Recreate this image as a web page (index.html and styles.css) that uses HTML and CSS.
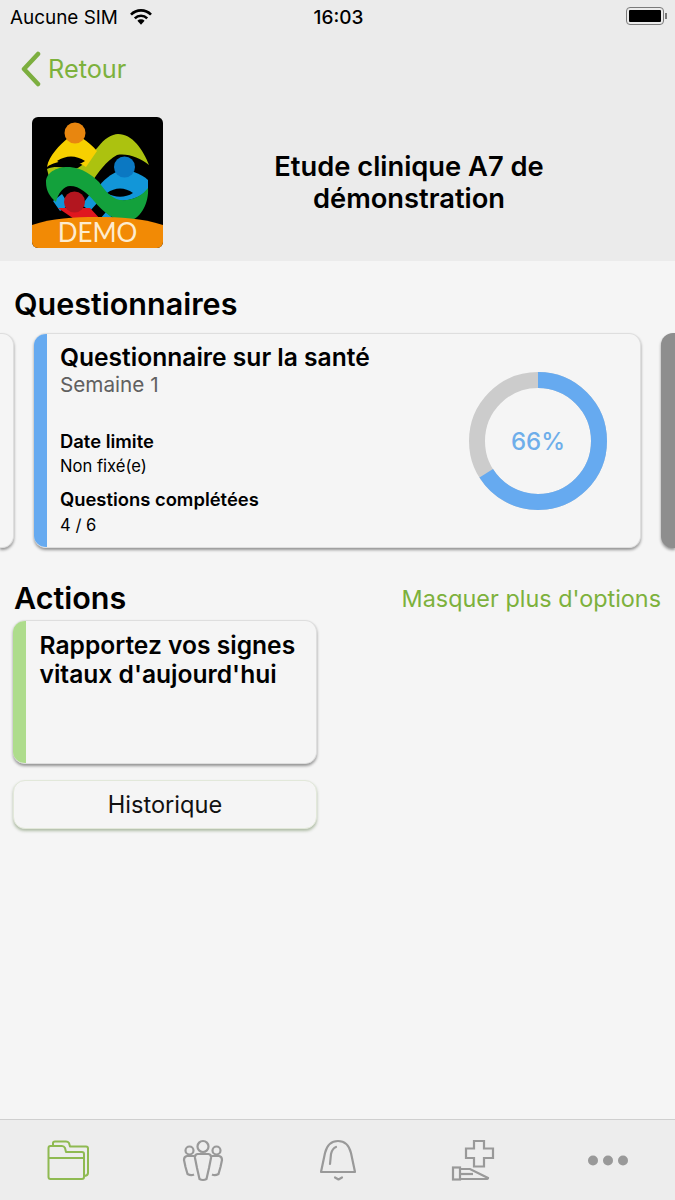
FILE: index.html
```html
<!DOCTYPE html>
<html lang="fr">
<head>
<meta charset="utf-8"/>
<meta content="width=device-width, initial-scale=1.0" name="viewport"/>
<title>Etude clinique A7</title>
<link rel="stylesheet" href="styles.css">
</head>
<body>
<div class="top">
  <div class="status-bar">
    <div class="status-left">
      <span>Aucune SIM</span>
      <svg class="wifi" viewBox="0 0 24 16" width="24" height="16">
        <path d="M12 15.8 L8.4 11.8 A5.2 5.2 0 0 1 15.6 11.8 Z" fill="#000"/>
        <path d="M5.8 9.3 A8.8 8.8 0 0 1 18.2 9.3" fill="none" stroke="#000" stroke-width="2.6"/>
        <path d="M2 5.6 A14 14 0 0 1 22 5.6" fill="none" stroke="#000" stroke-width="2.6"/>
      </svg>
    </div>
    <span class="status-time">16:03</span>
    <div class="status-right">
      <div class="battery"><div class="battery-fill"></div></div>
      <div class="battery-tip"></div>
    </div>
  </div>
  <div class="nav">
    <svg class="back-icon" viewBox="0 0 22 36" width="22" height="36">
      <path d="M18 3 L4 18 L18 33" fill="none" stroke="#7cae3f" stroke-width="4.5" stroke-linecap="round" stroke-linejoin="round"/>
    </svg>
    <span class="back-label">Retour</span>
  </div>
  <div class="study">
    <svg class="logo" viewBox="0 0 131 131" width="131" height="131">
      <rect width="131" height="131" rx="6" fill="#000"/>
      <path d="M15 52 C26 47 36 53 43 52 C52 50 58 38 66 30 C72 22 80 17 86 17 C100 17 111 32 117 48 C108 41 96 36 85 38 C74 44 66 56 59 66 C44 56 30 57 17 60 Z" fill="#acc20f"/>
      <path d="M15 50 C17 38 28 28 36 21 L50 21 C56 25 61 29 65 34 L54 50 C42 42 25 43 15 50 Z" fill="#f7d000"/>
      <path d="M25 44 C34 38 44 38 53 44 C44 50 34 50 25 44 Z" fill="#000"/>
      <circle cx="43" cy="16" r="10.5" fill="#e8860f"/>
      <path d="M64 74 C68 66 76 59 84 55 L102 55 C108 57 113 60 116 63 L116 74 C108 80 98 84 86 84 C78 82 70 78 64 74 Z" fill="#1296d8"/>
      <path d="M75 76 C83 70 93 70 101 76 C93 81 83 81 75 76 Z" fill="#000"/>
      <circle cx="92.5" cy="50" r="10.5" fill="#0b78c2"/>
      <path d="M21 84 L30 77 L37 88 L28 94 Z M50 88 L58 77 L66 85 L58 94 Z M68 102 L74 95 L84 104 Z" fill="#1296d8"/>
      <path d="M26 91 L58 91 L70 104 L48 106 Z" fill="#e0161f"/>
      <circle cx="42.5" cy="85" r="10.5" fill="#b2161f"/>
      <path d="M14 65 C14 55 26 49 38 50 C50 51 60 58 67 65 C72 72 78 81 88 83 C100 84 110 79 116 71 C117 85 110 100 98 104 C86 107 72 96 62 84 C56 77 48 69 38 69 C32 69 26 76 24 85 C18 80 14 74 14 65 Z" fill="#13a13c"/>
      <path d="M0 108 C20 101 42 100 65 100 C88 100 110 101 131 108 L131 125 A6 6 0 0 1 125 131 L6 131 A6 6 0 0 1 0 125 Z" fill="#f28a05"/>
      <text class="logo-text" x="65.5" y="124.5" text-anchor="middle">DEMO</text>
    </svg>
    <h1 class="study-title">Etude clinique A7 de démonstration</h1>
  </div>
</div>

<div class="content">
  <h2 class="section-title questionnaires-title">Questionnaires</h2>
  <div class="carousel">
    <div class="card prev-card"></div>
    <div class="card q-card">
      <div class="stripe stripe-blue"></div>
      <div class="q-body">
        <div class="q-title">Questionnaire sur la santé</div>
        <div class="q-sub">Semaine 1</div>
        <div class="q-label q-label-first">Date limite</div>
        <div class="q-value">Non fixé(e)</div>
        <div class="q-label q-label-second">Questions complétées</div>
        <div class="q-value q-value-last">4 / 6</div>
      </div>
      <svg class="ring" viewBox="0 0 140 140" width="140" height="140">
        <circle cx="70" cy="70" r="61" fill="none" stroke="#cccccc" stroke-width="16"/>
        <circle cx="70" cy="70" r="61" fill="none" stroke="#66aaf0" stroke-width="16" stroke-dasharray="253 384" transform="rotate(-90 70 70)"/>
        <text class="ring-text" x="70" y="79" text-anchor="middle">66%</text>
      </svg>
    </div>
    <div class="card next-card"></div>
  </div>

  <div class="actions-head">
    <h2 class="section-title">Actions</h2>
    <span class="more-link">Masquer plus d'options</span>
  </div>
  <div class="actions-col">
    <div class="card action-card">
      <div class="stripe stripe-green"></div>
      <div class="action-title">Rapportez vos signes vitaux d'aujourd'hui</div>
    </div>
    <div class="history-btn">Historique</div>
  </div>
</div>

<div class="tabbar">
  <div class="tab">
    <svg viewBox="0 0 44 44" width="44" height="44" fill="none" stroke="#8fba52" stroke-width="2" stroke-linejoin="round">
      <path d="M7 7 V5 Q7 3.5 9 3.5 H20 Q22 3.5 23 5 L24 8.5 H40 Q42 8.5 42 10.5 V35 Q42 37.5 38.5 38"/>
      <path d="M2.5 20 V10 Q2.5 8 4.5 8 H16 Q18 8 19 10 L20 14 H36 Q38 14 38 16 V39 Q38 41 36 41 H4.5 Q2.5 41 2.5 39 Z"/>
      <path d="M2.5 20 H38"/>
    </svg>
  </div>
  <div class="tab">
    <svg viewBox="0 0 44 44" width="44" height="44" fill="none" stroke="#999" stroke-width="2.2" stroke-linejoin="round">
      <circle cx="22" cy="8.5" r="5.5"/>
      <circle cx="8.5" cy="12.5" r="4"/>
      <circle cx="35.5" cy="12.5" r="4"/>
      <path d="M16.5 16 H27.5 Q30.5 16.5 30 20 L28 30 L25.5 41 Q22 43 18.5 41 L16 30 L14 20 Q13.5 16.5 16.5 16 Z"/>
      <path d="M13.5 18 H6 Q3 18.5 3 22 L4.5 29 L6.5 36 Q10 38 13 36.5"/>
      <path d="M30.5 18 H38 Q41 18.5 41 22 L39.5 29 L37.5 36 Q34 38 31 36.5"/>
    </svg>
  </div>
  <div class="tab">
    <svg viewBox="0 0 44 44" width="44" height="44" fill="none" stroke="#999" stroke-width="2.2" stroke-linejoin="round" stroke-linecap="round">
      <path d="M5 34 H39 L35 15 C33 7 28 3 22 3 C16 3 11 7 9 15 Z"/>
      <path d="M14 26 L15 16 C16 12 17 10 20 9"/>
      <path d="M19 39.5 L22.5 41.5 L26 39.5"/>
    </svg>
  </div>
  <div class="tab">
    <svg viewBox="0 0 44 44" width="44" height="44" fill="none" stroke="#999" stroke-width="2.2" stroke-linejoin="miter">
      <path d="M23 3 H33 V10.5 H42 V20 H33 V28.5 H23 V20 H15 V10.5 H23 Z"/>
      <rect x="2" y="29.5" width="7" height="12"/>
      <path d="M9 31 H19 L37 40 Q37 41 35 41 H9"/>
      <path d="M9 36 H22"/>
    </svg>
  </div>
  <div class="tab">
    <svg viewBox="0 0 44 44" width="44" height="44" fill="#999">
      <circle cx="7" cy="22.5" r="5"/>
      <circle cx="22" cy="22.5" r="5"/>
      <circle cx="37" cy="22.5" r="5"/>
    </svg>
  </div>
</div>
</body>
</html>
```

FILE: styles.css
```css
* {
  box-sizing: border-box;
}
body {
  margin: 0;
  height: 1200px;
  display: flex;
  flex-direction: column;
  font-family: Inter, "Liberation Sans", sans-serif;
  background: #f5f5f5;
  color: #000;
  overflow: hidden;
}

/* top area */
.top {
  height: 261px;
  background: #ebebeb;
}
.status-bar {
  height: 34px;
  padding: 0 8px 0 10px;
  display: flex;
  align-items: center;
  justify-content: space-between;
  font-size: 18.9px;
}
.status-left {
  width: 270px;
  display: flex;
  align-items: center;
  gap: 11px;
}
.status-time {
  font-weight: 500;
  font-size: 19px;
}
.status-right {
  width: 270px;
  display: flex;
  justify-content: flex-end;
  align-items: center;
  margin-bottom: 2px;
}
.battery {
  width: 38px;
  height: 18px;
  border: 1.5px solid #7a7a7a;
  border-radius: 4px;
  padding: 2px;
}
.battery-fill {
  height: 100%;
  width: 100%;
  background: #000;
  border-radius: 1px;
}
.battery-tip {
  width: 2px;
  height: 6px;
  margin-left: 1px;
  background: #7a7a7a;
}
.nav {
  height: 70px;
  padding-left: 20px;
  display: flex;
  align-items: center;
  gap: 6px;
}
.back-label {
  font-size: 25.3px;
  line-height: 30px;
  margin-bottom: 1px;
  color: #7db13c;
}
.study {
  display: flex;
  align-items: center;
  padding: 13px 20px 0 32px;
}
.logo {
  flex: none;
}
.logo-text {
  font-family: Lato, sans-serif;
  font-size: 26px;
  fill: #fdeccf;
}
.study-title {
  flex: 1;
  margin: 0;
  font-size: 27.3px;
  line-height: 32px;
  font-weight: 600;
  text-align: center;
  padding: 0 20px;
}

/* content */
.content {
  flex: 1;
}
.section-title {
  margin: 0;
  font-size: 30.5px;
  line-height: 34px;
  font-weight: 600;
}
.questionnaires-title {
  padding: 26px 14px 12px;
}
.carousel {
  display: flex;
  gap: 20px;
}
.card {
  display: flex;
  flex: none;
  background: #f5f5f5;
  border: 1px solid #dedede;
  border-radius: 12px;
  box-shadow: 0 2px 3px rgba(0, 0, 0, 0.4);
  overflow: hidden;
}
.q-card,
.action-card {
  border-left: none;
}
.q-card {
  width: 607px;
  height: 215px;
}
.prev-card,
.next-card {
  width: 14px;
  height: 215px;
}
.prev-card {
  border-left: none;
  border-radius: 0 12px 12px 0;
}
.next-card {
  background: #8e8e8e;
  border: none;
  border-radius: 12px 0 0 12px;
}
.stripe {
  flex: none;
  width: 13px;
}
.stripe-blue {
  background: #66aaf0;
}
.stripe-green {
  background: #aedc8c;
}
.q-body {
  flex: 1;
  padding: 9px 0 0 13px;
}
.q-title {
  font-size: 24.6px;
  line-height: 28px;
  font-weight: 600;
  white-space: nowrap;
}
.q-sub {
  margin-top: 1px;
  font-size: 20.7px;
  line-height: 26px;
  color: #606060;
}
.q-label {
  font-size: 18.4px;
  line-height: 24px;
  font-weight: 600;
  white-space: nowrap;
}
.q-label-first {
  margin-top: 31px;
}
.q-label-second {
  margin-top: 8px;
}
.q-value {
  font-size: 16.6px;
  line-height: 26px;
}
.q-value-last {
  margin-top: 1px;
}
.ring {
  flex: none;
  margin: 37px 32px 0 0;
}
.ring-text {
  font-family: Inter, sans-serif;
  font-size: 24px;
  font-weight: 500;
  fill: #6eaeea;
}
.actions-head {
  display: flex;
  justify-content: space-between;
  align-items: center;
  padding: 33px 14px 5px;
}
.more-link {
  font-size: 23.4px;
  color: #7db13c;
}
.actions-col {
  width: 304px;
  margin-left: 13px;
  display: flex;
  flex-direction: column;
  gap: 16px;
}
.action-card {
  height: 144px;
}
.action-title {
  padding: 10px 10px 0 13.5px;
  font-size: 24.6px;
  line-height: 29px;
  font-weight: 600;
}
.history-btn {
  height: 49px;
  display: flex;
  align-items: center;
  justify-content: center;
  font-size: 23.6px;
  color: #111;
  background: #f5f5f5;
  border: 1px solid #e2e8da;
  border-radius: 12px;
  box-shadow: 0 2px 3px rgba(90, 120, 70, 0.45);
}

/* bottom tabs */
.tabbar {
  height: 81px;
  flex: none;
  display: flex;
  background: #ededed;
  border-top: 1px solid #cfcfcf;
}
.tab {
  flex: 1;
  display: flex;
  justify-content: center;
  padding-top: 18px;
}
```
